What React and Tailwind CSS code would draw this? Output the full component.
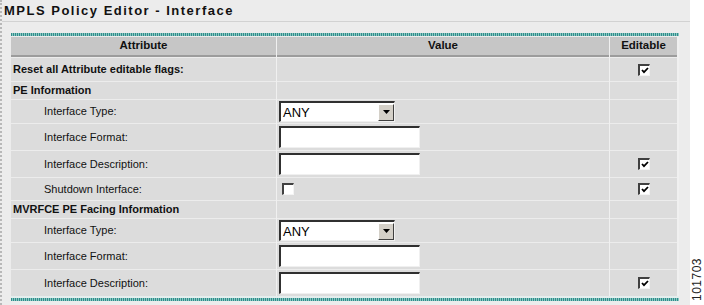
import React from 'react'

// rows of the editor table
const rows = [
  { kind: 'bold', label: 'Reset all Attribute editable flags:', editable: true, h: 'h-[24px]' },
  { kind: 'bold', label: 'PE Information', h: 'h-[18px]' },
  { kind: 'item', label: 'Interface Type:', value: 'select', h: 'h-[24px]' },
  { kind: 'item', label: 'Interface Format:', value: 'text', h: 'h-[27px]' },
  { kind: 'item', label: 'Interface Description:', value: 'text', editable: true, h: 'h-[27px]' },
  { kind: 'item', label: 'Shutdown Interface:', value: 'check', editable: true, h: 'h-[23px]' },
  { kind: 'bold', label: 'MVRFCE PE Facing Information', h: 'h-[18px]' },
  { kind: 'item', label: 'Interface Type:', value: 'select', h: 'h-[24px]' },
  { kind: 'item', label: 'Interface Format:', value: 'text', h: 'h-[27px]' },
  { kind: 'item', label: 'Interface Description:', value: 'text', editable: true, h: 'h-[27px]' },
]

function CheckBox({ checked }) {
  return (
    <div className="w-[12px] h-[12px] bg-white border-t-2 border-l-2 border-t-[#404040] border-l-[#404040] border-b border-r border-b-[#f4f4f4] border-r-[#f4f4f4] flex items-center justify-center">
      {checked && (
        <svg width="8" height="7" viewBox="0 0 8 7">
          <path d="M1 3 L3 5.2 L7 1" stroke="#000" strokeWidth="1.8" fill="none" />
        </svg>
      )}
    </div>
  )
}

function SelectBox() {
  return (
    <div className="w-[116px] h-[21px] bg-white border-t-2 border-l-2 border-t-[#303030] border-l-[#303030] border-b border-r border-b-[#f0f0f0] border-r-[#f0f0f0] flex items-center">
      <span className="flex-1 pl-[2px] text-[13px] leading-none text-black">ANY</span>
      <div className="w-[16px] h-[17px] bg-[#d4d0c8] border-t border-l border-t-white border-l-white border-b border-r border-b-[#404040] border-r-[#404040] flex items-center justify-center">
        <svg width="7" height="4" viewBox="0 0 7 4">
          <path d="M0 0 H7 L3.5 4 Z" fill="#000" />
        </svg>
      </div>
    </div>
  )
}

function TextBox() {
  return (
    <div className="w-[141px] h-[22px] bg-white border-t-2 border-l-2 border-t-[#303030] border-l-[#303030] border-b border-r border-b-[#f0f0f0] border-r-[#f0f0f0]" />
  )
}

function TealRule() {
  return (
    <div className="h-[3px] bg-[repeating-linear-gradient(90deg,#2f8e8a_0px,#2f8e8a_1px,#8cc6c3_1px,#8cc6c3_2px)]" />
  )
}

export default function App() {
  return (
    <div className="w-[704px] h-[305px] flex bg-white overflow-hidden font-['Liberation_Sans',Arial,sans-serif]">
      <div className="w-[690px] h-full bg-[#ececec] border-l-2 border-dotted border-l-[#b8b8b8] flex flex-col">
        <div className="h-[22px] border-b border-[#d2d2d2] flex items-center pl-[2px]">
          <h1 className="text-[13px] font-bold tracking-[1.5px] text-[#111] leading-none">
            MPLS Policy Editor - Interface
          </h1>
        </div>

        <div className="pt-[11px] pl-[9px] w-[677px]">
          <TealRule />
          <div className="mt-px grid grid-cols-[265px_332px_67px] gap-x-px bg-[#f0f0f0]">
            <div className="h-[20px] bg-[#c6c6c6] border-b-2 border-[#9c9c9c] flex items-center justify-center text-[11.5px] font-bold text-[#111]">Attribute</div>
            <div className="h-[20px] bg-[#c6c6c6] border-b-2 border-[#9c9c9c] flex items-center justify-center text-[11.5px] font-bold text-[#111]">Value</div>
            <div className="h-[20px] bg-[#c6c6c6] border-b-2 border-[#9c9c9c] flex items-center justify-center text-[11.5px] font-bold text-[#111]">Editable</div>

            {rows.map((r, i) => (
              <React.Fragment key={i}>
                <div className={`${r.h} bg-[#dcdcdc] border-t border-[#ececec] flex items-center text-[11px] text-[#111] ${r.kind === 'bold' ? 'pl-[2px] font-bold' : 'pl-[33px]'}`}>
                  {r.label}
                </div>
                <div className={`${r.h} bg-[#dcdcdc] border-t border-[#ececec] flex items-center pl-[2px]`}>
                  {r.value === 'select' && <SelectBox />}
                  {r.value === 'text' && <TextBox />}
                  {r.value === 'check' && <div className="pl-[3px]"><CheckBox /></div>}
                </div>
                <div className={`${r.h} bg-[#dcdcdc] border-t border-[#ececec] flex items-center justify-center`}>
                  {r.editable && <div className="pl-[1px]"><CheckBox checked /></div>}
                </div>
              </React.Fragment>
            ))}
          </div>
          <div className="h-[2px] bg-[#e4eeee]" />
          <TealRule />
        </div>
      </div>

      <div className="w-[14px] h-full flex flex-col justify-end items-center pb-[4px]">
        <span className="[writing-mode:vertical-rl] rotate-180 text-[12px] leading-none tracking-[0.5px] text-[#222]">101703</span>
      </div>
    </div>
  )
}
